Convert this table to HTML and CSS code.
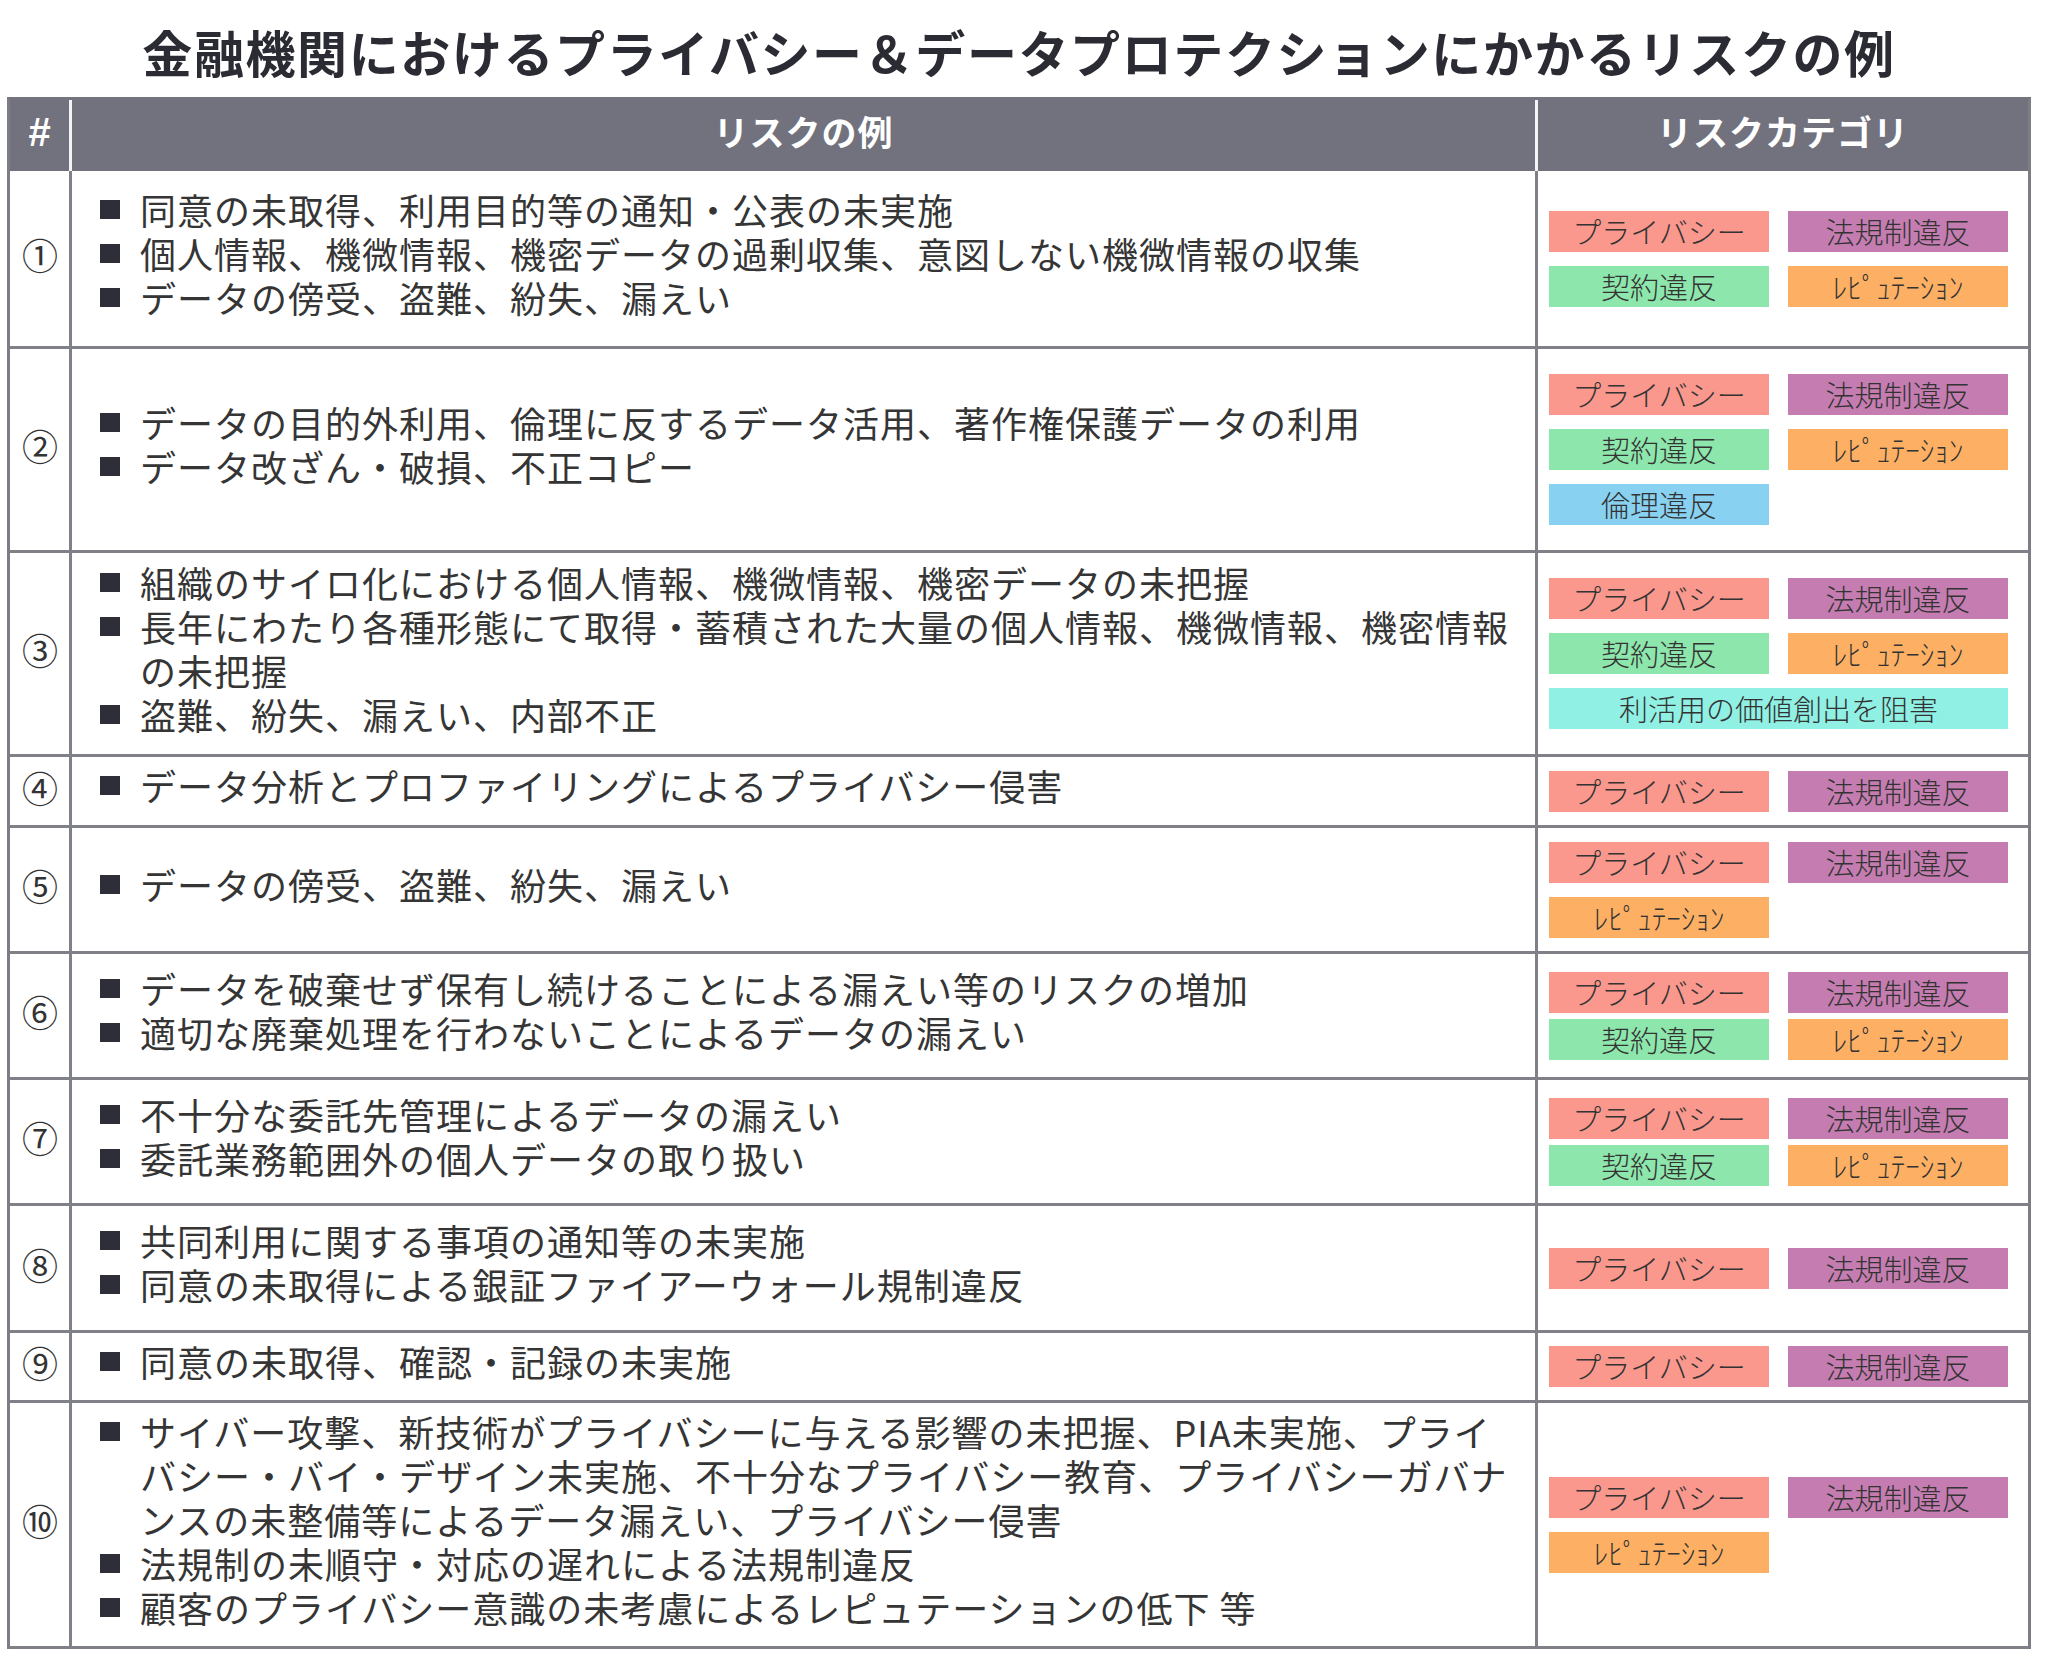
FILE: index.html
```html
<!DOCTYPE html>
<html lang="ja">
<head>
<meta charset="utf-8">
<title>金融機関におけるプライバシー＆データプロテクションにかかるリスクの例</title>
<link rel="stylesheet" href="styles.css">
</head>
<body>
<div class="page">
  <h1 class="title">金融機関におけるプライバシー＆データプロテクションにかかるリスクの例</h1>
  <div class="risk-table">
    <div class="hd hd-num">#</div>
    <div class="hd">リスクの例</div>
    <div class="hd hd-last">リスクカテゴリ</div>

    <div class="cell num">①</div>
    <div class="cell risks">
      <ul class="list">
        <li><span class="mark"></span><span class="txt">同意の未取得、利用目的等の通知・公表の未実施</span></li>
        <li><span class="mark"></span><span class="txt">個人情報、機微情報、機密データの過剰収集、意図しない機微情報の収集</span></li>
        <li><span class="mark"></span><span class="txt">データの傍受、盗難、紛失、漏えい</span></li>
      </ul>
    </div>
    <div class="cell cats">
      <div class="tags">
        <span class="tag privacy">プライバシー</span><span class="tag law">法規制違反</span>
        <span class="tag contract">契約違反</span><span class="tag rep">ﾚﾋﾟｭﾃｰｼｮﾝ</span>
      </div>
    </div>

    <div class="cell num">②</div>
    <div class="cell risks">
      <ul class="list">
        <li><span class="mark"></span><span class="txt">データの目的外利用、倫理に反するデータ活用、著作権保護データの利用</span></li>
        <li><span class="mark"></span><span class="txt">データ改ざん・破損、不正コピー</span></li>
      </ul>
    </div>
    <div class="cell cats">
      <div class="tags">
        <span class="tag privacy">プライバシー</span><span class="tag law">法規制違反</span>
        <span class="tag contract">契約違反</span><span class="tag rep">ﾚﾋﾟｭﾃｰｼｮﾝ</span>
        <span class="tag ethics">倫理違反</span>
      </div>
    </div>

    <div class="cell num">③</div>
    <div class="cell risks">
      <ul class="list">
        <li><span class="mark"></span><span class="txt">組織のサイロ化における個人情報、機微情報、機密データの未把握</span></li>
        <li><span class="mark"></span><span class="txt"><span class="ln">長年にわたり各種形態にて取得・蓄積された大量の個人情報、機微情報、機密情報</span><span class="ln">の未把握</span></span></li>
        <li><span class="mark"></span><span class="txt">盗難、紛失、漏えい、内部不正</span></li>
      </ul>
    </div>
    <div class="cell cats">
      <div class="tags">
        <span class="tag privacy">プライバシー</span><span class="tag law">法規制違反</span>
        <span class="tag contract">契約違反</span><span class="tag rep">ﾚﾋﾟｭﾃｰｼｮﾝ</span>
        <span class="tag value wide">利活用の価値創出を阻害</span>
      </div>
    </div>

    <div class="cell num">④</div>
    <div class="cell risks">
      <ul class="list">
        <li><span class="mark"></span><span class="txt">データ分析とプロファイリングによるプライバシー侵害</span></li>
      </ul>
    </div>
    <div class="cell cats">
      <div class="tags">
        <span class="tag privacy">プライバシー</span><span class="tag law">法規制違反</span>
      </div>
    </div>

    <div class="cell num">⑤</div>
    <div class="cell risks">
      <ul class="list">
        <li><span class="mark"></span><span class="txt">データの傍受、盗難、紛失、漏えい</span></li>
      </ul>
    </div>
    <div class="cell cats">
      <div class="tags">
        <span class="tag privacy">プライバシー</span><span class="tag law">法規制違反</span>
        <span class="tag rep">ﾚﾋﾟｭﾃｰｼｮﾝ</span>
      </div>
    </div>

    <div class="cell num">⑥</div>
    <div class="cell risks">
      <ul class="list">
        <li><span class="mark"></span><span class="txt">データを破棄せず保有し続けることによる漏えい等のリスクの増加</span></li>
        <li><span class="mark"></span><span class="txt">適切な廃棄処理を行わないことによるデータの漏えい</span></li>
      </ul>
    </div>
    <div class="cell cats">
      <div class="tags tight">
        <span class="tag privacy">プライバシー</span><span class="tag law">法規制違反</span>
        <span class="tag contract">契約違反</span><span class="tag rep">ﾚﾋﾟｭﾃｰｼｮﾝ</span>
      </div>
    </div>

    <div class="cell num">⑦</div>
    <div class="cell risks">
      <ul class="list">
        <li><span class="mark"></span><span class="txt">不十分な委託先管理によるデータの漏えい</span></li>
        <li><span class="mark"></span><span class="txt">委託業務範囲外の個人データの取り扱い</span></li>
      </ul>
    </div>
    <div class="cell cats">
      <div class="tags tight">
        <span class="tag privacy">プライバシー</span><span class="tag law">法規制違反</span>
        <span class="tag contract">契約違反</span><span class="tag rep">ﾚﾋﾟｭﾃｰｼｮﾝ</span>
      </div>
    </div>

    <div class="cell num">⑧</div>
    <div class="cell risks">
      <ul class="list">
        <li><span class="mark"></span><span class="txt">共同利用に関する事項の通知等の未実施</span></li>
        <li><span class="mark"></span><span class="txt">同意の未取得による銀証ファイアーウォール規制違反</span></li>
      </ul>
    </div>
    <div class="cell cats">
      <div class="tags">
        <span class="tag privacy">プライバシー</span><span class="tag law">法規制違反</span>
      </div>
    </div>

    <div class="cell num">⑨</div>
    <div class="cell risks">
      <ul class="list">
        <li><span class="mark"></span><span class="txt">同意の未取得、確認・記録の未実施</span></li>
      </ul>
    </div>
    <div class="cell cats">
      <div class="tags">
        <span class="tag privacy">プライバシー</span><span class="tag law">法規制違反</span>
      </div>
    </div>

    <div class="cell num">⑩</div>
    <div class="cell risks">
      <ul class="list">
        <li><span class="mark"></span><span class="txt"><span class="ln">サイバー攻撃、新技術がプライバシーに与える影響の未把握、PIA未実施、プライ</span><span class="ln">バシー・バイ・デザイン未実施、不十分なプライバシー教育、プライバシーガバナ</span><span class="ln">ンスの未整備等によるデータ漏えい、プライバシー侵害</span></span></li>
        <li><span class="mark"></span><span class="txt">法規制の未順守・対応の遅れによる法規制違反</span></li>
        <li><span class="mark"></span><span class="txt">顧客のプライバシー意識の未考慮によるレピュテーションの低下 等</span></li>
      </ul>
    </div>
    <div class="cell cats">
      <div class="tags">
        <span class="tag privacy">プライバシー</span><span class="tag law">法規制違反</span>
        <span class="tag rep">ﾚﾋﾟｭﾃｰｼｮﾝ</span>
      </div>
    </div>
  </div>
</div>
</body>
</html>
```

FILE: styles.css
```css
* { box-sizing: border-box; }

html, body {
  margin: 0;
  padding: 0;
  background: #ffffff;
}

body {
  width: 2048px;
  height: 1669px;
  font-family: "Noto Sans CJK JP", "Noto Sans", sans-serif;
  color: #333333;
}

.page {
  width: 2024px;
  margin-left: 7px;
}

.title {
  margin: 0;
  height: 97px;
  padding-top: 16px;
  font-size: 50px;
  line-height: 70px;
  font-weight: 700;
  letter-spacing: 1.6px;
  text-align: center;
  color: #2b2b34;
  white-space: nowrap;
}

.risk-table {
  display: grid;
  grid-template-columns: 62px 1466px 490px;
  grid-template-rows: 71px 178px 204px 204px 71px 126px 126px 126px 127px 70px 246px;
  border-top: 3px solid #74747f;
  border-left: 3px solid #7d7d86;
  border-right: 3px solid #7d7d86;
}

.hd {
  background: #72727e;
  color: #ffffff;
  font-weight: 700;
  font-size: 35px;
  letter-spacing: 1px;
  display: flex;
  align-items: center;
  justify-content: center;
  border-right: 3px solid #f4f4f6;
  padding-bottom: 10px;
}

.hd-num {
  font-size: 40px;
  letter-spacing: 0;
  padding-bottom: 6px;
  font-family: "Liberation Sans", "Noto Sans", sans-serif;
}

.hd-last {
  border-right: none;
}

.cell {
  border-bottom: 3px solid #808089;
  display: flex;
  align-items: center;
}

.num {
  border-right: 3px solid #808089;
  justify-content: center;
  font-size: 36px;
  color: #333333;
  padding-left: 1px;
  padding-bottom: 9px;
}

.risks {
  border-right: 3px solid #808089;
  padding-left: 28px;
  padding-right: 10px;
  padding-bottom: 12px;
}

.list {
  list-style: none;
  margin: 0;
  padding: 0;
}

.list li {
  display: flex;
  align-items: flex-start;
  font-size: 36px;
  line-height: 44px;
  letter-spacing: 1px;
  color: #353535;
}

.mark {
  flex: 0 0 auto;
  width: 20px;
  height: 19px;
  margin-top: 13px;
  margin-right: 20px;
  background: #2e2e38;
}

.txt {
  white-space: nowrap;
}

.ln {
  display: block;
}

.cats {
  padding-left: 11px;
}

.tags {
  display: grid;
  grid-template-columns: 220px 220px;
  column-gap: 19px;
  row-gap: 14px;
}

.tags.tight {
  row-gap: 6px;
}

.tag {
  display: block;
  height: 41px;
  line-height: 41px;
  text-align: center;
  font-size: 29px;
  font-weight: 300;
  color: #333333;
  white-space: nowrap;
}

.tag.wide {
  grid-column: 1 / span 2;
}

.privacy { background: #fa988d; }
.law { background: #c57db1; }
.contract { background: #8de6ab; }
.rep { background: #fdb064; }
.ethics { background: #88d1f1; }
.value { background: #8ff0e3; }
```
